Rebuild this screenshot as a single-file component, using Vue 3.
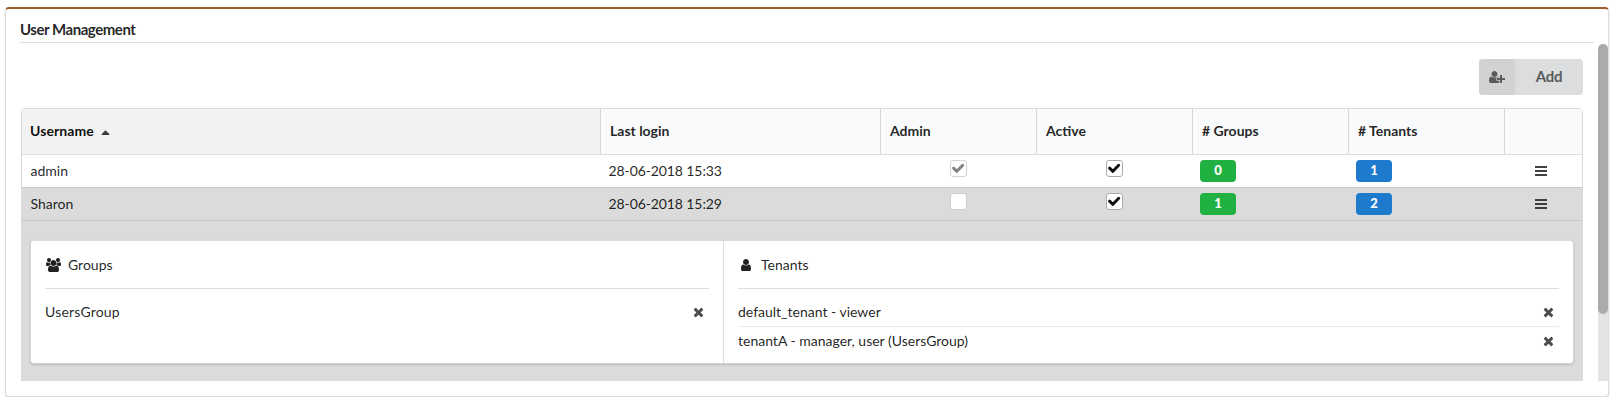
<script setup>
const icons = {
  user: { w: 1280, d: 'M1280 1399q0 109-62.5 187t-150.5 78h-854q-88 0-150.5-78t-62.5-187q0-85 8.5-160.5t31.5-152 58.5-131 94-89 134.5-34.5q131 128 313 128t313-128q76 0 134.5 34.5t94 89 58.5 131 31.5 152 8.5 160.5zm-256-887q0 159-112.5 271.5t-271.5 112.5-271.5-112.5-112.5-271.5 112.5-271.5 271.5-112.5 271.5 112.5 112.5 271.5z' },
  users: { w: 1920, d: 'M593 896q-162 5-265 128h-134q-82 0-138-40.5t-56-118.5q0-353 124-353 6 0 43.5 21t97.5 42.5 119 21.5q67 0 133-23-5 37-5 66 0 139 81 256zm1071 637q0 120-73 189.5t-194 69.5h-874q-121 0-194-69.5t-73-189.5q0-53 3.5-103.5t14-109 26.5-108.5 43-97.5 62-81 85.5-53.5 111.5-20q10 0 43 21.5t73 48 107 48 135 21.5 135-21.5 107-48 73-48 43-21.5q61 0 111.5 20t85.5 53.5 62 81 43 97.5 26.5 108.5 14 109 3.5 103.5zm-1024-1277q0 106-75 181t-181 75-181-75-75-181 75-181 181-75 181 75 75 181zm704 384q0 159-112.5 271.5t-271.5 112.5-271.5-112.5-112.5-271.5 112.5-271.5 271.5-112.5 271.5 112.5 112.5 271.5zm576 225q0 78-56 118.5t-138 40.5h-134q-103-123-265-128 81-117 81-256 0-29-5-66 66 23 133 23 59 0 119-21.5t97.5-42.5 43.5-21q124 0 124 353zm-128-609q0 106-75 181t-181 75-181-75-75-181 75-181 181-75 181 75 75 181z' },
  userPlus: { w: 2048, d: 'M704 896q-159 0-271.5-112.5t-112.5-271.5 112.5-271.5 271.5-112.5 271.5 112.5 112.5 271.5-112.5 271.5-271.5 112.5zm960 128h352q13 0 22.5 9.5t9.5 22.5v192q0 13-9.5 22.5t-22.5 9.5h-352v352q0 13-9.5 22.5t-22.5 9.5h-192q-13 0-22.5-9.5t-9.5-22.5v-352h-352q-13 0-22.5-9.5t-9.5-22.5v-192q0-13 9.5-22.5t22.5-9.5h352v-352q0-13 9.5-22.5t22.5-9.5h192q13 0 22.5 9.5t9.5 22.5v352zm-736 224q0 52 38 90t90 38h256v238q-68 50-171 50h-874q-121 0-194-69t-73-190q0-53 3.5-103.5t14-109 26.5-108.5 43-97.5 62-81 85.5-53.5 111.5-20q19 0 39 17 79 61 154.5 91.5t164.5 30.5 164.5-30.5 154.5-91.5q20-17 39-17 132 0 217 96h-223q-52 0-90 38t-38 90v192z' },
  times: { w: 1408, d: 'M1298 1322q0 40-28 68l-136 136q-28 28-68 28t-68-28l-294-294-294 294q-28 28-68 28t-68-28l-136-136q-28-28-28-68t28-68l294-294-294-294q-28-28-28-68t28-68l136-136q28-28 68-28t68 28l294 294 294-294q28-28 68-28t68 28l136 136q28 28 28 68t-28 68l-294 294 294 294q28 28 28 68z' },
}
const headers = ['Username', 'Last login', 'Admin', 'Active', '# Groups', '# Tenants', '']
const rows = [
  { name: 'admin', login: '28-06-2018 15:33', admin: true, locked: true, active: true, groups: 0, tenants: 1 },
  { name: 'Sharon', login: '28-06-2018 15:29', admin: false, locked: false, active: true, groups: 1, tenants: 2, selected: true },
]
const panels = [
  { title: 'Groups', icon: icons.users, iconClass: 'i-users', itemClass: 'wide', items: ['UsersGroup'] },
  { title: 'Tenants', icon: icons.user, iconClass: 'i-user', itemClass: '', items: ['default_tenant - viewer', 'tenantA - manager, user (UsersGroup)'] },
]
</script>

<template>
  <section class="widget">
    <h5 class="title">User Management</h5>
    <div class="body">
      <div class="content">
        <div class="toolbar">
          <button class="add">
            <span class="add-icon"><svg class="i-plus" :viewBox="`0 0 ${icons.userPlus.w} 1792`"><path :d="icons.userPlus.d" /></svg></span>
            <span class="add-label">Add</span>
          </button>
        </div>
        <div class="table">
          <div class="grid head">
            <div v-for="(h, i) in headers" :key="i" class="th" :class="{ sorted: i === 0 }">
              <span>{{ h }}</span>
              <svg v-if="i === 0" class="caret" viewBox="0 0 9 5"><path d="M4.5 0.2 8.5 4.3Q8.7 5 8 5H1Q.3 5 .5 4.3Z" /></svg>
            </div>
          </div>
          <div v-for="r in rows" :key="r.name" class="grid row" :class="{ selected: r.selected }">
            <div class="td name">{{ r.name }}</div>
            <div class="td login">{{ r.login }}</div>
            <div class="td center">
              <span class="box light" :class="{ locked: r.locked }"><svg v-if="r.admin" viewBox="0 0 15 15"><path d="M2.6 7.1 5.9 10.3 11.7 4.3" /></svg></span>
            </div>
            <div class="td center">
              <span class="box"><svg v-if="r.active" viewBox="0 0 15 15"><path d="M2.6 7.1 5.9 10.3 11.7 4.3" /></svg></span>
            </div>
            <div class="td count"><span class="badge green">{{ r.groups }}</span></div>
            <div class="td count"><span class="badge blue">{{ r.tenants }}</span></div>
            <div class="td menu">
              <svg viewBox="0 0 12 10"><path d="M0 0h12v2H0zM0 4h12v2H0zM0 8h12v2H0z" /></svg>
            </div>
          </div>
          <div class="detail">
            <div class="segment">
              <div v-for="p in panels" :key="p.title" class="panel">
                <div class="panel-title">
                  <span class="icon-slot"><svg :class="p.iconClass" :viewBox="`0 0 ${p.icon.w} 1792`"><path :d="p.icon.d" /></svg></span>
                  <span>{{ p.title }}</span>
                </div>
                <div class="items" :class="p.itemClass">
                  <div v-for="t in p.items" :key="t" class="item">
                    <span>{{ t }}</span>
                    <svg class="i-times" viewBox="0 0 1408 1792"><path :d="icons.times.d" /></svg>
                  </div>
                </div>
              </div>
            </div>
          </div>
        </div>
      </div>
      <div class="track"><div class="thumb"></div></div>
    </div>
  </section>
</template>

<style>
body { background: #fff; }
</style>

<style scoped>
* { box-sizing: border-box; }
svg { display: block; fill: currentColor; }
.widget {
  margin: 7px 5px 0;
  height: 390px;
  border: 1px solid #d9dadb;
  border-top: 2px solid #a05a2c;
  border-radius: 4px;
  box-shadow: 0 1px 2px rgba(34, 36, 38, .15);
  padding-left: 14px;
  background: #fff;
  color: rgba(0, 0, 0, .87);
  font: 14px/20px Lato, "Liberation Sans", sans-serif;
}
.title {
  margin: 0 14px 1px 0;
  height: 34px;
  padding-top: 10px;
  border-bottom: 1px solid #dcddde;
  font-size: 15px;
  letter-spacing: -.46px;
  line-height: 20px;
  font-weight: 700;
}
.body { display: flex; height: 337px; }
.content { width: 1563px; margin-right: 15px; padding-left: 1px; overflow: hidden; }
.toolbar { display: flex; justify-content: flex-end; padding-top: 15px; }
.add {
  display: flex;
  width: 104px;
  height: 36px;
  padding: 0;
  border: 0;
  border-radius: 4px;
  overflow: hidden;
  background: #dcddde;
  color: #5a5b5c;
  font: 700 15px/35px Lato, "Liberation Sans", sans-serif;
  letter-spacing: -.2px;
}
.add-icon { width: 36px; height: 36px; background: #d1d2d3; display: flex; align-items: center; justify-content: center; }
.i-plus { width: 16px; height: 14px; }
.add-label { flex: 1; text-align: center; }
.table { margin-top: 13px; border: 1px solid #dadbdc; border-radius: 4px 4px 0 0; height: 300px; overflow: hidden; }
.grid { display: grid; grid-template-columns: 578px 280px repeat(4, 156px) 78px; }
.head { height: 46px; border-bottom: 1px solid #dddedf; background: #f9fafb; }
.th { display: flex; align-items: center; font-weight: 700; padding: 0 0 1px 9px; border-left: 1px solid #d6d7d8; }
.th.sorted { background: #f2f2f2; border-left: 0; padding-left: 8px; color: rgba(0, 0, 0, .95); letter-spacing: .08px; }
.caret { width: 9px; height: 5px; margin: 3px 0 0 7px; color: #3c3c3c; }
.row { height: 33px; border-bottom: 1px solid #c8c8c8; }
.row.selected { background: #dbdbdb; }
.td { display: flex; align-items: center; padding-left: 9px; }
.td.name { padding-left: 8.5px; }
.td.login { padding-left: 8.5px; letter-spacing: -.1px; }
.td.center { align-items: flex-start; padding: 5px 0 0 70px; }
.td.count { padding-left: 8px; align-items: flex-start; padding-top: 5px; }
.td.menu { padding-left: 31px; color: #404040; }
.menu svg { width: 12px; height: 10px; }
.box { width: 17px; height: 17px; border: 1px solid #aaabac; border-radius: 3px; background: #fff; color: #111; }
.box.light { border-color: #ceced0; }
.box.locked { color: #848484; border-color: #d2d3d4; }
.box svg { width: 15px; height: 15px; fill: none; stroke: currentColor; stroke-width: 3; stroke-linejoin: round; stroke-linecap: round; }
.badge { width: 36px; height: 22px; border-radius: 4px; color: #fff; font-size: 13px; line-height: 21px; font-weight: 900; text-align: center; }
.green { background: #21b142; }
.blue { background: #1e7acd; }
.detail { background: #dbdbdb; height: 180px; padding: 19px 8px 0; }
.segment {
  display: grid;
  grid-template-columns: 692px 1fr;
  height: 124px;
  border: 1px solid #d2d3d4;
  border-top-color: #dbdbdb;
  border-radius: 4px;
  box-shadow: 0 1px 2px rgba(34, 36, 38, .18);
  background: #fff;
}
.panel { padding: 0 14px; }
.panel + .panel { border-left: 1px solid #dcddde; }
.panel-title { display: flex; align-items: center; height: 48px; border-bottom: 1px solid #dcddde; }
.icon-slot { width: 16px; margin-right: 7px; display: flex; justify-content: center; }
.i-users { width: 15px; height: 14px; }
.i-user { width: 10px; height: 14px; }
.items { padding-top: 9px; }
.items.wide { letter-spacing: .2px; }
.item { display: flex; align-items: center; justify-content: space-between; height: 28px; }
.item + .item { border-top: 1px solid #ececec; height: 29px; }
.i-times { width: 11px; height: 14px; margin-right: 5px; color: #4d4d4d; }
.track { width: 10px; height: 337px; background: #e4e4e4; border-radius: 5px 5px 0 0; }
.thumb { height: 270px; border-radius: 5px; background: #ababab; }
</style>
